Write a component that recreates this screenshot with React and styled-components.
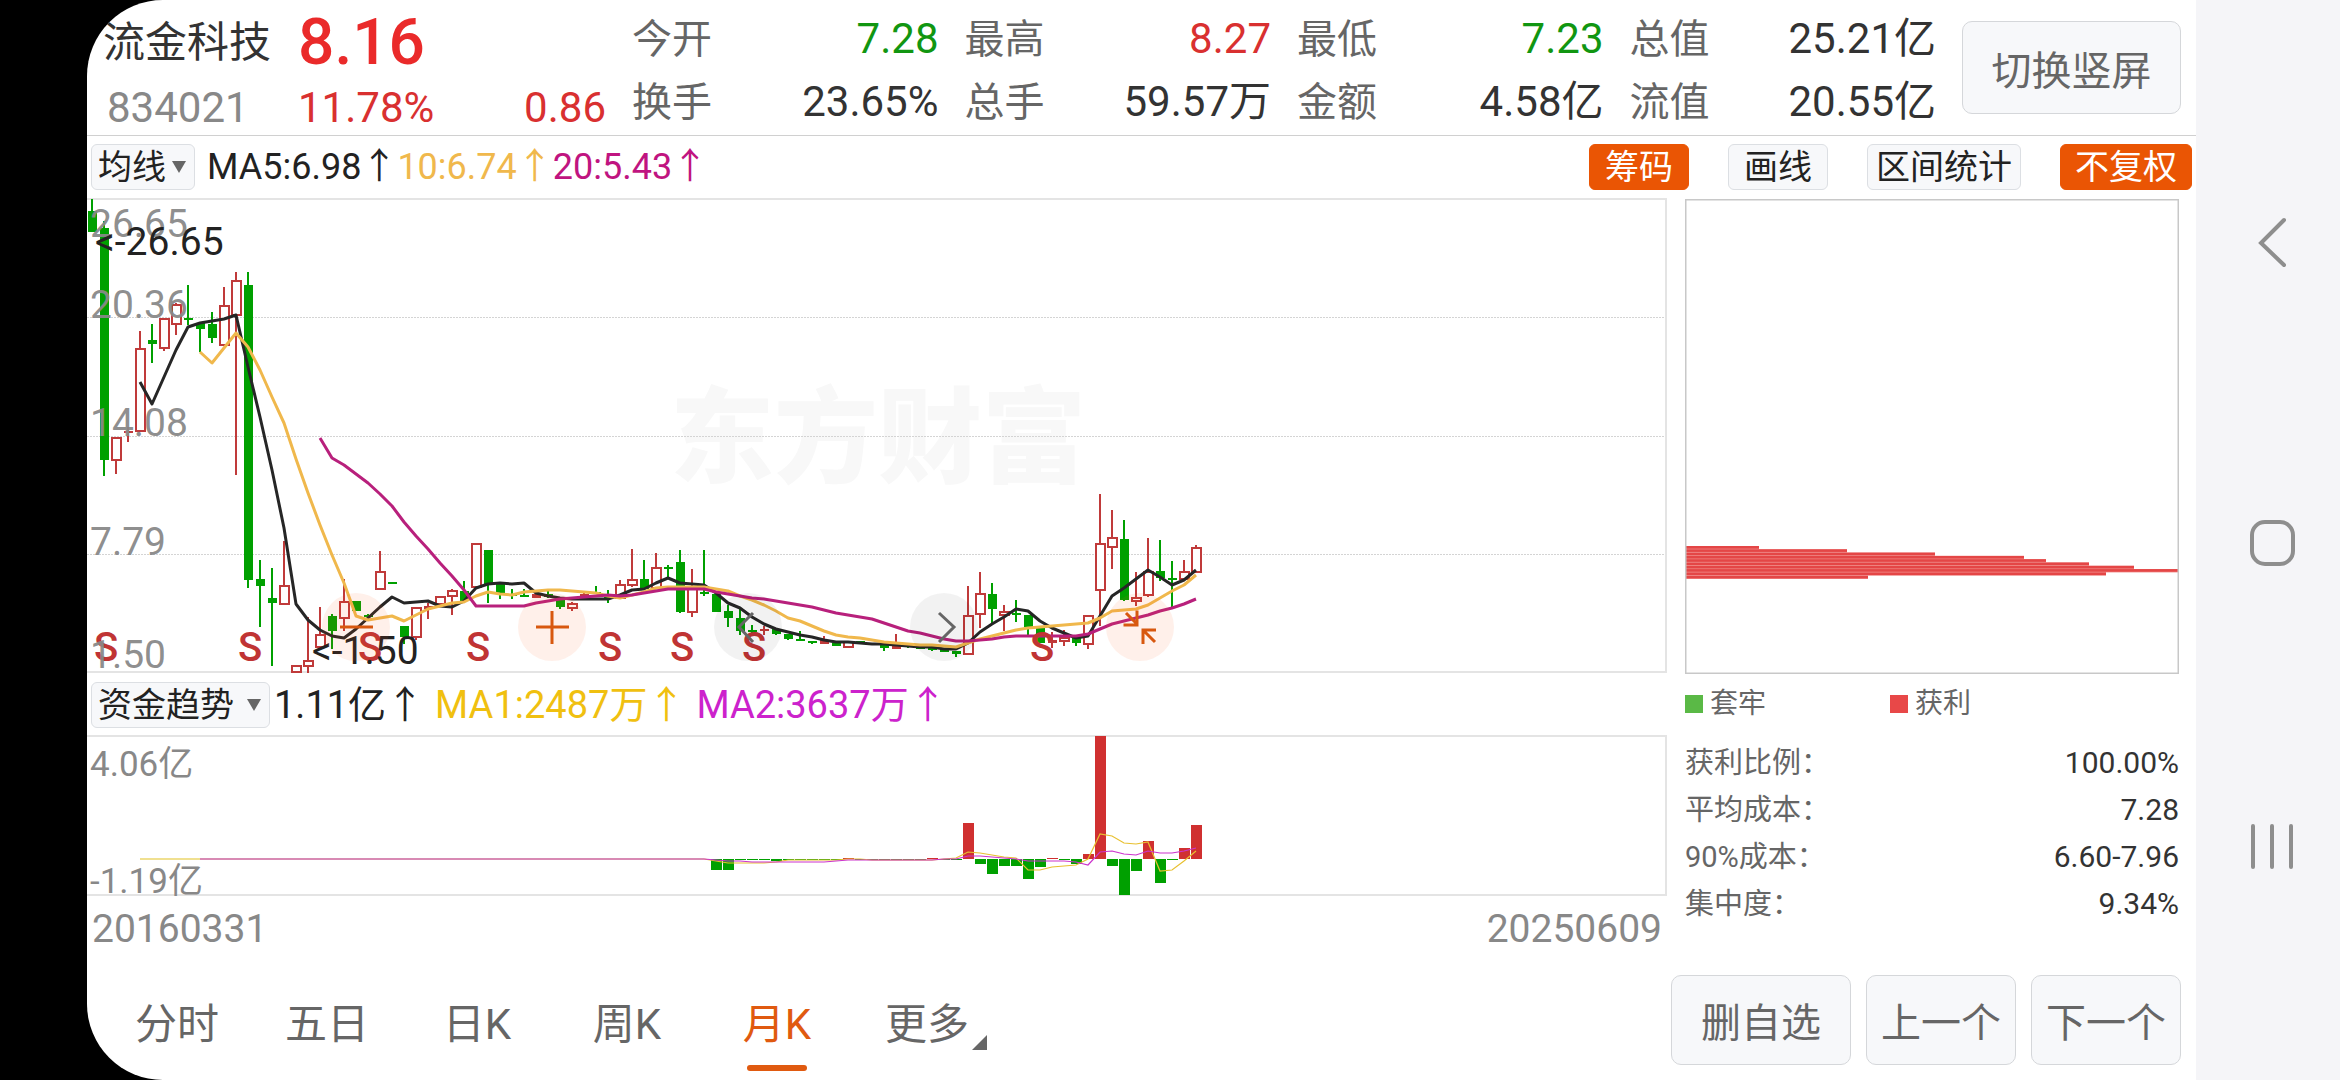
import React, {useState} from 'react';
import styled, {createGlobalStyle, css} from 'styled-components';

const UP = '#c03a3a';
const DOWN = '#00a000';

const GlobalStyle = createGlobalStyle`
  * {
    box-sizing: border-box;
  }
  body {
    margin: 0;
    background: #000;
    color: #333;
    font-family: Roboto, "Noto Sans CJK SC", sans-serif;
    line-height: 1.2;
  }
  button,
  select {
    font-family: inherit;
  }
`;

const Device = styled.div`
  display: flex;
  min-height: 100vh;
  padding-left: 87px;
  background: #000;
`;

const Screen = styled.main`
  flex: 1;
  min-width: 0;
  display: flex;
  flex-direction: column;
  background: #fff;
  border-radius: 76px 0 0 76px;
  overflow: hidden;
`;

const Header = styled.header`
  display: flex;
  gap: 26px;
  min-height: 136px;
  padding: 0 15px 0 16px;
  border-bottom: 1px solid #d0d0d0;
`;

const Quote = styled.div`
  display: grid;
  grid-template-columns: 195px 154px 154px;
  grid-template-rows: 80px 51px;
  align-items: center;
  padding-top: 3px;
  font-size: 42px;
`;

const StockName = styled.h1`
  margin: 0;
  font-size: 42px;
  font-weight: 400;
  color: #333;
`;

const Price = styled.strong`
  grid-column: span 2;
  font-size: 64px;
  font-weight: 500;
  color: #ea2a2a;
`;

const Code = styled.span`
  padding-left: 4px;
  color: #888;
`;

const Change = styled.span`
  color: #d93030;
  text-align: ${props => props.align || 'left'};
`;

const Stats = styled.dl`
  flex: 1;
  display: grid;
  grid-template-columns: repeat(4, 1fr);
  grid-template-rows: 63px 63px;
  column-gap: 26px;
  margin: 0;
  padding-top: 8px;
`;

const Stat = styled.div`
  display: flex;
  align-items: center;
  justify-content: space-between;
  white-space: nowrap;
`;

const StatLabel = styled.dt`
  font-size: 40px;
  color: #666;
`;

const StatValue = styled.dd`
  margin: 0;
  font-size: 42px;
  color: ${props => props.color || '#333'};
`;

const PanelButton = styled.button`
  min-width: ${props => props.width};
  height: ${props => props.height || '90px'};
  padding: 0 8px;
  font-size: 40px;
  color: #666;
  background: #f7f8fa;
  border: 1px solid #d5d7da;
  border-radius: 10px;
  white-space: nowrap;
`;

const SwitchButton = styled(PanelButton)`
  margin-top: 21px;
`;

const Toolbar = styled.div`
  display: flex;
  align-items: center;
  justify-content: space-between;
  height: ${props => props.height};
  padding: 0 4px;
`;

const ToolGroup = styled.div`
  display: flex;
  align-items: center;
  gap: ${props => props.gap};
`;

const SelectBox = styled.label`
  position: relative;
  display: block;
  width: ${props => props.width};

  &::after {
    content: '';
    position: absolute;
    top: 17px;
    right: 9px;
    border: 7px solid transparent;
    border-top: 12px solid #666;
    border-bottom: 0;
    pointer-events: none;
  }
`;

const Select = styled.select`
  appearance: none;
  display: block;
  width: 100%;
  height: 46px;
  padding: 0 0 0 6px;
  font-size: 34px;
  line-height: 44px;
  color: #222;
  background: #f7f8fa;
  border: 1px solid #dcdfe3;
  border-radius: 6px;
`;

const Reading = styled.span`
  padding-top: 2px;
  font-size: ${props => props.size};
  color: ${props => props.color};
  white-space: nowrap;
`;

const Tool = styled.button`
  height: 46px;
  padding: 0;
  width: ${props => props.width};
  font-size: 34px;
  line-height: 42px;
  color: #222;
  background: #f7f8fa;
  border: 1px solid #dcdfe3;
  border-radius: 6px;
  white-space: nowrap;

  ${props =>
    props.$on &&
    css`
      color: #fff;
      background: #ea5504;
      border-color: #ea5504;
    `}
`;

const Body = styled.div`
  display: flex;
`;

const ChartColumn = styled.div`
  flex: 1580;
  min-width: 0;
`;

const ChartFrame = styled.div`
  position: relative;
`;

const Drawing = styled.svg`
  display: block;
  width: 100%;
  height: auto;

  text {
    font-family: Roboto, "Noto Sans CJK SC", sans-serif;
  }
`;

const ZoomBar = styled.div`
  position: absolute;
  left: 235px;
  bottom: 13px;
  display: flex;
  gap: 128px;
`;

const ZoomButton = styled.button`
  width: 68px;
  height: 68px;
  padding: 0;
  color: ${props => (props.$muted ? '#666' : '#d8580f')};
  background: ${props => (props.$muted ? 'rgba(0, 0, 0, 0.05)' : 'rgba(250, 90, 20, 0.09)')};
  border: 0;
  border-radius: 50%;

  svg {
    display: block;
  }
`;

const Dates = styled.div`
  display: flex;
  align-items: center;
  justify-content: space-between;
  height: 64px;
  padding: 0 5px;
  font-size: 39px;
  color: #888;
`;

const Side = styled.aside`
  flex: 494;
  min-width: 0;
  margin: 1px 17px 0 18px;
`;

const Legend = styled.div`
  display: grid;
  grid-template-columns: 205px 1fr;
  align-items: center;
  height: 60px;
`;

const LegendItem = styled.span`
  display: flex;
  align-items: center;
  gap: 7px;
  font-size: 28px;
  color: #666;

  &::before {
    content: '';
    width: 18px;
    height: 18px;
    background: ${props => props.color};
  }
`;

const CostTable = styled.table`
  width: 100%;
  margin-top: 5px;
  border-collapse: collapse;

  th,
  td {
    height: 47px;
    padding: 0;
    line-height: 40px;
  }
  th {
    font-size: 29px;
    font-weight: 400;
    text-align: left;
    color: #666;
  }
  td {
    font-size: 30px;
    text-align: right;
    color: #333;
  }
`;

const Footer = styled.footer`
  display: flex;
  align-items: center;
  justify-content: space-between;
  margin-top: auto;
  padding: 0 15px 15px;
`;

const Tabs = styled.nav`
  display: flex;
`;

const Tab = styled.button`
  position: relative;
  width: 150px;
  height: 90px;
  padding: 0;
  font-size: 42px;
  color: ${props => (props.$active ? '#e05a10' : '#666')};
  background: none;
  border: 0;

  ${props =>
    props.$active &&
    css`
      &::after {
        content: '';
        position: absolute;
        left: 45px;
        right: 45px;
        bottom: -6px;
        height: 6px;
        border-radius: 3px;
        background: #e05a10;
      }
    `}

  ${props =>
    props.$more &&
    css`
      &::after {
        content: '';
        position: absolute;
        right: 15px;
        bottom: 15px;
        border-left: 15px solid transparent;
        border-bottom: 15px solid #666;
      }
    `}
`;

const Actions = styled.div`
  display: flex;
  gap: 15px;
`;

const SystemNav = styled.nav`
  display: flex;
  flex-direction: column;
  align-items: center;
  justify-content: center;
  gap: 238px;
  width: 144px;
  padding: 8px 0 0 8px;
  background: #f5f5f8;
`;

const SystemButton = styled.button`
  width: 64px;
  height: 64px;
  padding: 0;
  background: none;
  border: 0;

  svg {
    display: block;
  }
`;

const STATS = [
  {label: '今开', value: '7.28', color: '#119611'},
  {label: '最高', value: '8.27', color: '#d93030'},
  {label: '最低', value: '7.23', color: '#119611'},
  {label: '总值', value: '25.21亿'},
  {label: '换手', value: '23.65%'},
  {label: '总手', value: '59.57万'},
  {label: '金额', value: '4.58亿'},
  {label: '流值', value: '20.55亿'}
];

const COSTS = [
  ['获利比例：', '100.00%'],
  ['平均成本：', '7.28'],
  ['90%成本：', '6.60-7.96'],
  ['集中度：', '9.34%']
];

const TABS = ['分时', '五日', '日K', '周K', '月K', '更多'];

// one entry per month: kind (g down, r up, f up and filled), high, body top, body bottom, low
const CANDLES = [
  ['g', 1, 13, 34, 34], ['g', 23, 30, 262, 278], ['r', 239, 239, 262, 276], ['f', 229, 233, 235, 244],
  ['r', 133, 150, 233, 233], ['g', 126, 142, 146, 165], ['r', 120, 120, 150, 153], ['r', 105, 106, 126, 137],
  ['g', 87, 120, 122, 127], ['g', 125, 125, 131, 154], ['g', 114, 126, 140, 145], ['r', 89, 107, 147, 147],
  ['r', 74, 82, 117, 277], ['g', 74, 87, 382, 390], ['g', 362, 381, 388, 429], ['g', 370, 400, 405, 468],
  ['r', 343, 387, 406, 406], ['r', 467, 467, 474, 474], ['r', 419, 462, 468, 475], ['r', 409, 436, 449, 449],
  ['g', 416, 418, 433, 451], ['r', 381, 403, 420, 433], ['g', 403, 403, 413, 413], ['g', 416, 417, 418, 419],
  ['r', 353, 373, 391, 391], ['g', 384, 384, 386, 386], ['g', 428, 428, 439, 446], ['r', 409, 409, 439, 442],
  ['f', 405, 408, 411, 421], ['r', 398, 398, 406, 406], ['r', 391, 392, 398, 417], ['g', 383, 393, 403, 403],
  ['r', 345, 345, 389, 389], ['g', 352, 352, 387, 405], ['g', 386, 386, 395, 401], ['g', 391, 396, 397, 401],
  ['g', 391, 397, 399, 399], ['f', 395, 396, 400, 400], ['g', 393, 396, 399, 400], ['g', 401, 401, 409, 411],
  ['r', 404, 405, 410, 413], ['f', 395, 396, 402, 402], ['g', 388, 394, 396, 396], ['g', 392, 399, 401, 405],
  ['r', 382, 386, 400, 400], ['r', 351, 381, 387, 389], ['g', 362, 381, 391, 391], ['r', 355, 369, 390, 390],
  ['g', 367, 369, 371, 380], ['g', 352, 364, 414, 415], ['r', 371, 390, 414, 419], ['g', 352, 394, 396, 398],
  ['g', 396, 396, 414, 414], ['g', 407, 413, 420, 429], ['g', 411, 420, 433, 437], ['g', 427, 432, 433, 437],
  ['f', 428, 431, 433, 437], ['g', 431, 431, 436, 437], ['g', 436, 436, 441, 442], ['g', 433, 441, 443, 443],
  ['g', 443, 443, 445, 446], ['f', 438, 442, 446, 446], ['g', 445, 445, 448, 448], ['r', 443, 443, 449, 449],
  ['g', 443, 443, 445, 445], ['g', 445, 445, 447, 447], ['g', 447, 447, 450, 453], ['f', 436, 447, 451, 451],
  ['g', 447, 447, 449, 450], ['g', 449, 449, 450, 450], ['g', 450, 450, 452, 453], ['g', 451, 451, 454, 454],
  ['g', 453, 453, 456, 459], ['r', 388, 417, 456, 456], ['r', 374, 395, 416, 430], ['g', 385, 396, 411, 425],
  ['r', 407, 413, 417, 433], ['g', 402, 415, 417, 424], ['g', 417, 417, 429, 437], ['g', 429, 429, 445, 445],
  ['f', 434, 442, 445, 450], ['r', 432, 439, 443, 448], ['g', 440, 440, 445, 448], ['r', 417, 417, 446, 451],
  ['r', 296, 345, 392, 428], ['r', 312, 339, 349, 371], ['g', 322, 341, 402, 403], ['r', 374, 399, 403, 408],
  ['r', 340, 373, 397, 399], ['g', 342, 373, 380, 383], ['g', 363, 380, 381, 410], ['r', 362, 373, 381, 381],
  ['r', 347, 349, 374, 374]
];

// moving averages, each starting at the month of its "from"
const PRICE_LINES = [
  {
    color: '#262626',
    from: 4,
    ys: [184, 206, 179, 152, 129, 125, 123, 121, 117, 169, 219, 272, 330, 406, 422, 432, 438, 440, 431, 420, 409,
      399, 405, 404, 403, 408, 409, 403, 390, 386, 385, 386, 385, 395, 398, 400, 401, 401, 401, 401, 397, 392, 391,
      385, 380, 385, 386, 387, 395, 405, 410, 419, 426, 431, 434, 437, 439, 442, 444, 444, 445, 446, 446, 447, 448,
      449, 449, 451, 451, 445, 434, 426, 419, 411, 413, 423, 430, 435, 440, 438, 418, 398, 390, 381, 372, 379, 387,
      382, 372]
  },
  {
    color: '#f0b84c',
    from: 9,
    ys: [154, 165, 150, 135, 149, 172, 199, 225, 261, 295, 327, 357, 385, 418, 422, 420, 418, 423, 417, 411, 408,
      405, 404, 398, 394, 396, 397, 394, 393, 392, 392, 393, 394, 395, 398, 400, 397, 394, 390, 389, 389, 389, 389,
      391, 393, 398, 402, 407, 413, 420, 423, 428, 433, 437, 439, 440, 442, 444, 445, 446, 447, 447, 448, 449, 445,
      441, 438, 435, 432, 430, 429, 428, 427, 426, 425, 420, 413, 412, 411, 407, 400, 393, 387, 377]
  },
  {
    color: '#b8207c',
    from: 19,
    ys: [240, 260, 267, 276, 285, 296, 308, 324, 338, 351, 365, 378, 392, 408, 408, 408, 408, 408, 405, 403, 401,
      400, 399, 398, 397, 398, 397, 395, 393, 391, 391, 391, 391, 394, 396, 398, 400, 401, 403, 405, 407, 409, 412,
      415, 417, 419, 421, 425, 429, 433, 435, 438, 441, 443, 443, 442, 441, 439, 438, 438, 438, 438, 438, 438, 436,
      431, 426, 423, 420, 417, 413, 410, 406, 401]
  }
];

const PRICE_AXIS = [
  ['26.65', 39],
  ['20.36', 120],
  ['14.08', 238],
  ['7.79', 357],
  ['1.50', 470]
];

const GRID = [119, 238, 356];

const SIGNALS = [19, 163, 283, 391, 523, 595, 667, 955];

// far end of every bar from month 52 on; the zero line is at 124
const FLOW_ZERO = 124;
const FLOW_BARS = [
  135, 135, 125, 125, 125, 126, 125, 125, 125, 125, 125, 123, 125, 125, 125, 125, 125, 125, 123, 125, 125, 88, 129,
  139, 131, 131, 144, 132, 123, 125, 129, 119, 1, 131, 160, 136, 106, 148, 125, 113, 90
];

const FLOW_LINES = [
  {
    color: '#e8c030',
    from: 51,
    ys: [124, 126, 128, 128, 128, 128, 127, 125, 125, 125, 125, 125, 124, 124, 125, 125, 125, 125, 125, 125, 124,
      123, 117, 118, 120, 122, 123, 135, 135, 132, 131, 130, 124, 99, 101, 108, 109, 107, 136, 135, 126, 116]
  },
  {
    color: '#cc33cc',
    from: 51,
    ys: [124, 125, 126, 126, 127, 127, 127, 127, 127, 127, 127, 126, 125, 125, 125, 125, 125, 125, 125, 125, 124,
      124, 121, 121, 122, 123, 124, 126, 126, 126, 126, 127, 130, 117, 116, 119, 120, 116, 118, 118, 116, 113]
  }
];

const CHIPS = [73, 161, 249, 338, 360, 403, 448, 492, 420, 182];

const monthX = index => 5 + index * 12;

const toPoints = ({from, ys}) => ys.map((y, i) => `${monthX(from + i)},${y}`).join(' ');

const Candle = ({index, data}) => {
  const [kind, high, top, bottom, low] = data;
  const x = monthX(index);
  const color = kind === 'g' ? DOWN : UP;
  return (
    <g>
      {high < top && <rect x={x - 1} y={high} width="2" height={top - high} fill={color} />}
      {low > bottom && <rect x={x - 1} y={bottom} width="2" height={low - bottom} fill={color} />}
      {kind === 'r' ? (
        <rect x={x - 4} y={top + 1} width="9" height={Math.max(bottom - top - 1, 2)} fill="#fff" stroke={color} strokeWidth="2" />
      ) : (
        <rect x={x - 4} y={top} width="9" height={Math.max(bottom - top, 2)} fill={color} />
      )}
    </g>
  );
};

const PriceChart = () => (
  <Drawing viewBox="0 0 1580 476" role="img" aria-label="月K">
    <text x="583" y="277" fontSize="104" fontWeight="900" fill="#f8f8f8">东方财富</text>
    {GRID.map(y => (
      <line key={y} x1="0" x2="1580" y1={y + 0.5} y2={y + 0.5} stroke="#d4d4d4" strokeDasharray="2 1" />
    ))}
    <path d="M0 1H1579V474H0" fill="none" stroke="#e4e4e4" strokeWidth="2" />
    {CANDLES.map((data, i) => (
      <Candle key={i} index={i} data={data} />
    ))}
    {PRICE_LINES.map(line => (
      <polyline key={line.color} points={toPoints(line)} fill="none" stroke={line.color} strokeWidth="3" strokeLinejoin="round" />
    ))}
    {SIGNALS.map(x => (
      <text key={x} x={x} y="463" fontSize="40" fontWeight="500" fill="#c03434" textAnchor="middle">S</text>
    ))}
    {PRICE_AXIS.map(([label, y]) => (
      <text key={label} x="3" y={y} fontSize="39" fill="#888" fillOpacity="0.95">{label}</text>
    ))}
    <text x="8" y="57" fontSize="39" fill="#222">&lt;-26.65</text>
    <text x="225" y="466" fontSize="39" fill="#222">&lt;-1.50</text>
  </Drawing>
);

const FlowChart = () => (
  <Drawing viewBox="0 0 1580 162" role="img" aria-label="资金趋势">
    <path d="M0 1H1579V160H0" fill="none" stroke="#e4e4e4" strokeWidth="2" />
    {FLOW_BARS.map((y, i) => (
      <rect
        key={i}
        x={monthX(52 + i) - 5}
        y={Math.min(y, FLOW_ZERO)}
        width="11"
        height={Math.abs(y - FLOW_ZERO)}
        fill={y < FLOW_ZERO ? '#d03030' : DOWN}
      />
    ))}
    <path d="M53 124H113" stroke="#f0e090" strokeWidth="2" />
    <path d="M113 124H617" stroke="#d88ab4" strokeWidth="2" />
    {FLOW_LINES.map(line => (
      <polyline key={line.color} points={toPoints(line)} fill="none" stroke={line.color} strokeWidth="1.2" />
    ))}
    <text x="3" y="41" fontSize="35" fill="#888">4.06亿</text>
    <text x="3" y="158" fontSize="35" fill="#888">-1.19亿</text>
  </Drawing>
);

const ChipChart = () => (
  <Drawing viewBox="0 0 494 475" role="img" aria-label="筹码">
    {CHIPS.map((width, i) => (
      <g key={i}>
        <rect x="1" y={347 + i * 3.3} width={width} height="3.3" fill="#f08583" />
        <rect x="1" y={347 + i * 3.3} width={width} height="2.6" fill="#e44646" />
      </g>
    ))}
    <rect x="0.75" y="0.75" width="492.5" height="473.5" fill="none" stroke="#c8c8c8" strokeWidth="1.5" />
  </Drawing>
);

const ZOOMS = [
  {label: '缩小', d: 'M18 34H51'},
  {label: '放大', d: 'M18 34H51M34 18V51'},
  {label: '左移', d: 'M39 20L25 34L39 49', muted: true},
  {label: '右移', d: 'M29 20L44 34L29 49', muted: true},
  {label: '收起', d: 'M20 20L31 31M31 17.500V32H17.500M49 49L38 38M50 37H37V51'}
];

const App = () => {
  const [tab, setTab] = useState('月K');

  return (
    <Device>
      <GlobalStyle />
      <Screen>
        <Header>
          <Quote>
            <StockName>流金科技</StockName>
            <Price>8.16</Price>
            <Code>834021</Code>
            <Change>11.78%</Change>
            <Change align="right">0.86</Change>
          </Quote>
          <Stats>
            {STATS.map(({label, value, color}) => (
              <Stat key={label}>
                <StatLabel>{label}</StatLabel>
                <StatValue color={color}>{value}</StatValue>
              </Stat>
            ))}
          </Stats>
          <SwitchButton width="219px" height="93px">切换竖屏</SwitchButton>
        </Header>

        <Toolbar height="62px">
          <ToolGroup gap="12px">
            <SelectBox width="104px">
              <Select aria-label="均线">
                <option>均线</option>
              </Select>
            </SelectBox>
            <ToolGroup gap="0">
              <Reading size="36px" color="#222">MA5:6.98↑</Reading>
              <Reading size="36px" color="#f0b84c">10:6.74↑</Reading>
              <Reading size="36px" color="#c01480">20:5.43↑</Reading>
            </ToolGroup>
          </ToolGroup>
          <ToolGroup gap="39px">
            <Tool width="100px" $on>筹码</Tool>
            <Tool width="100px">画线</Tool>
            <Tool width="154px">区间统计</Tool>
            <Tool width="132px" $on>不复权</Tool>
          </ToolGroup>
        </Toolbar>

        <Body>
          <ChartColumn>
            <ChartFrame>
              <PriceChart />
              <ZoomBar>
                {ZOOMS.map(({label, d, muted}) => (
                  <ZoomButton key={label} aria-label={label} $muted={muted}>
                    <svg width="68" height="68" viewBox="0 0 68 68" fill="none" stroke="currentColor" strokeWidth="3">
                      <path d={d} />
                    </svg>
                  </ZoomButton>
                ))}
              </ZoomBar>
            </ChartFrame>
            <Toolbar height="61px">
              <ToolGroup gap="4px">
                <SelectBox width="179px">
                  <Select aria-label="资金趋势">
                    <option>资金趋势</option>
                  </Select>
                </SelectBox>
                <ToolGroup gap="11px">
                  <Reading size="38px" color="#222">1.11亿↑</Reading>
                  <Reading size="38px" color="#f0c010">MA1:2487万↑</Reading>
                  <Reading size="38px" color="#cc22cc">MA2:3637万↑</Reading>
                </ToolGroup>
              </ToolGroup>
            </Toolbar>
            <FlowChart />
            <Dates>
              <time>20160331</time>
              <time>20250609</time>
            </Dates>
          </ChartColumn>

          <Side>
            <ChipChart />
            <Legend>
              <LegendItem color="#5ab946">套牢</LegendItem>
              <LegendItem color="#e84848">获利</LegendItem>
            </Legend>
            <CostTable>
              <tbody>
                {COSTS.map(([label, value]) => (
                  <tr key={label}>
                    <th scope="row">{label}</th>
                    <td>{value}</td>
                  </tr>
                ))}
              </tbody>
            </CostTable>
          </Side>
        </Body>

        <Footer>
          <Tabs>
            {TABS.map(name => (
              <Tab key={name} $active={name === tab} $more={name === '更多'} onClick={() => setTab(name)}>
                {name}
              </Tab>
            ))}
          </Tabs>
          <Actions>
            <PanelButton width="180px">删自选</PanelButton>
            <PanelButton width="150px">上一个</PanelButton>
            <PanelButton width="150px">下一个</PanelButton>
          </Actions>
        </Footer>
      </Screen>

      <SystemNav>
        <SystemButton aria-label="返回">
          <svg width="64" height="64" viewBox="0 0 64 64" fill="none" stroke="#8e8e8e" strokeWidth="4" strokeLinecap="round">
            <path d="M44 10L21 33L44 55" />
          </svg>
        </SystemButton>
        <SystemButton aria-label="主屏幕">
          <svg width="64" height="64" viewBox="0 0 64 64" fill="none" stroke="#8e8e8e" strokeWidth="4">
            <rect x="12" y="10" width="41" height="42" rx="13" />
          </svg>
        </SystemButton>
        <SystemButton aria-label="最近任务">
          <svg width="64" height="64" viewBox="0 0 64 64" fill="none" stroke="#8e8e8e" strokeWidth="4" strokeLinecap="round">
            <path d="M13 12V53M32 12V53M51 12V53" />
          </svg>
        </SystemButton>
      </SystemNav>
    </Device>
  );
};

export default App;
